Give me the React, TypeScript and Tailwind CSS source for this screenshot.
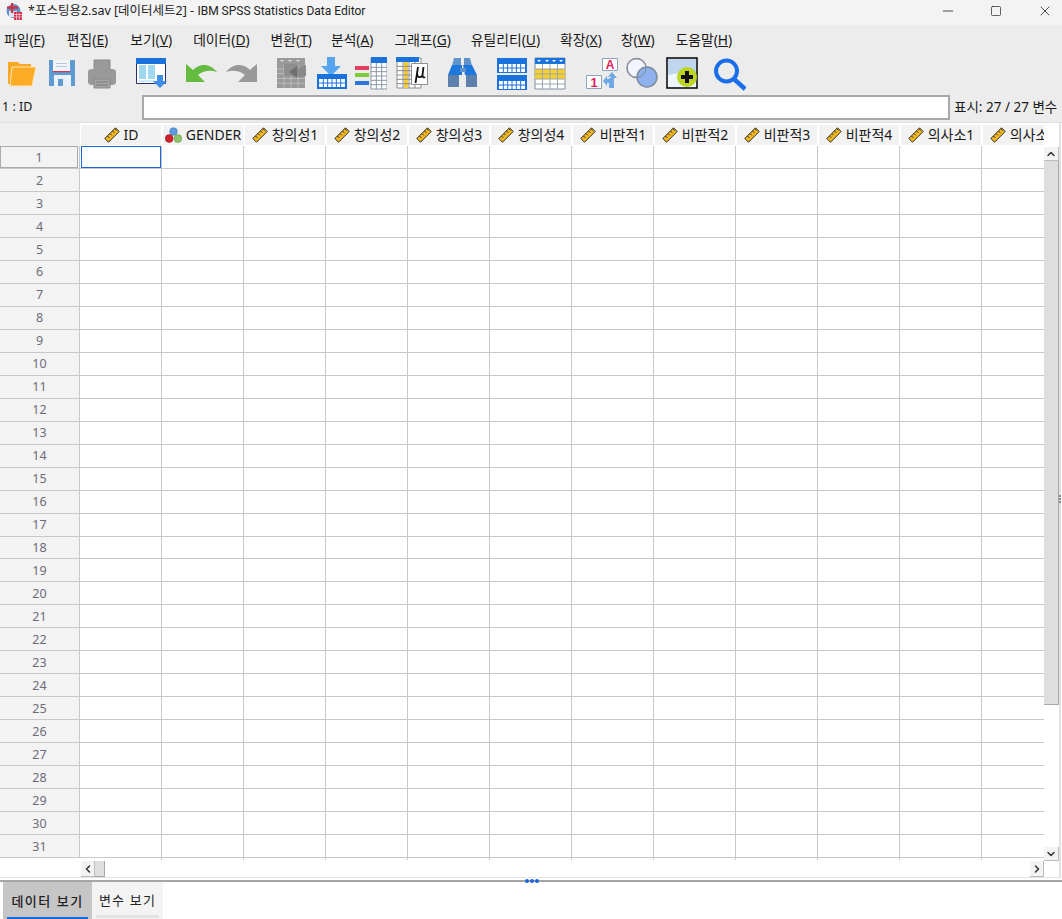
import { Minus, Square, X, ChevronUp, ChevronDown, ChevronLeft, ChevronRight } from 'lucide-react'

const FONT = "font-['Noto_Sans','Noto_Sans_CJK_KR',sans-serif]"

const MENUS = [
  { label: '파일', key: 'F', ml: 'ml-[4px]' },
  { label: '편집', key: 'E', ml: 'ml-[22px]' },
  { label: '보기', key: 'V', ml: 'ml-[22px]' },
  { label: '데이터', key: 'D', ml: 'ml-[21px]' },
  { label: '변환', key: 'T', ml: 'ml-[21px]' },
  { label: '분석', key: 'A', ml: 'ml-[19px]' },
  { label: '그래프', key: 'G', ml: 'ml-[21px]' },
  { label: '유틸리티', key: 'U', ml: 'ml-[20px]' },
  { label: '확장', key: 'X', ml: 'ml-[20px]' },
  { label: '창', key: 'W', ml: 'ml-[19px]' },
  { label: '도움말', key: 'H', ml: 'ml-[21px]' },
]

const COLUMNS = [
  { name: 'ID', type: 'scale' },
  { name: 'GENDER', type: 'nominal' },
  { name: '창의성1', type: 'scale' },
  { name: '창의성2', type: 'scale' },
  { name: '창의성3', type: 'scale' },
  { name: '창의성4', type: 'scale' },
  { name: '비판적1', type: 'scale' },
  { name: '비판적2', type: 'scale' },
  { name: '비판적3', type: 'scale' },
  { name: '비판적4', type: 'scale' },
  { name: '의사소1', type: 'scale' },
  { name: '의사소2', type: 'scale' },
]

const ROWS = Array.from({ length: 31 }, (_, i) => i + 1)

function GridLines({ x, y, w, h, cols, rows, color }: { x: number; y: number; w: number; h: number; cols: number; rows: number; color: string }) {
  // thin white or grey lines for the little tables in the toolbar icons
  const lines = []
  for (let i = 1; i < cols; i++) {
    const p = x + (w / cols) * i
    lines.push(<path key={'c' + i} d={`M${p} ${y}V${y + h}`} stroke={color} strokeWidth="1" />)
  }
  for (let i = 1; i < rows; i++) {
    const p = y + (h / rows) * i
    lines.push(<path key={'r' + i} d={`M${x} ${p}H${x + w}`} stroke={color} strokeWidth="1" />)
  }
  return <>{lines}</>
}

function Icon({ children, ml }: { children: React.ReactNode; ml: string }) {
  return (
    <svg viewBox="0 0 32 34" className={`w-[32px] h-[34px] shrink-0 ${ml}`}>
      {children}
    </svg>
  )
}

function Toolbar() {
  return (
    <div className="h-[40px] flex items-start pt-[5px] bg-[#ececec]">
      {/* open */}
      <Icon ml="ml-[6px]">
        <path d="M2 5h10l2 2h11v5H2z" fill="#f9a825" />
        <path d="M2 5h3v22H2z" fill="#f9a825" />
        <path d="M6 10h24l-4 19H4z" fill="#fbab25" stroke="#fde6b8" strokeWidth="1" />
      </Icon>
      {/* save */}
      <Icon ml="ml-[9px]">
        <path d="M2 3h26v26H2z" fill="#5f9bd2" />
        <path d="M6 3h17v11H6z" fill="#f1f4f9" />
        <path d="M6 14h17v1.200H6z" fill="#d8344f" />
        <path d="M9 6.500h11M9 9.500h11" stroke="#b6c4d8" strokeWidth="1.200" />
        <path d="M7 18h17v11H7z" fill="#e9f2fb" />
        <path d="M11 22h5v7h-5z" fill="#5f9bd2" />
      </Icon>
      {/* print */}
      <Icon ml="ml-[7px]">
        <path d="M8 3h16v10H8z" fill="#9a9a9a" stroke="#8a8a8a" />
        <path d="M2 15q0-3 4-3h20q4 0 4 3v10q0 3-4 3H6q-4 0-4-3z" fill="#999" />
        <path d="M8 22h16v9H8z" fill="#a3a3a3" stroke="#8a8a8a" />
        <path d="M10 25h12M10 28h12" stroke="#7f7f7f" />
      </Icon>
      {/* data view */}
      <Icon ml="ml-[17px]">
        <path d="M1.500 6.500h29v20h-29z" fill="#fff" stroke="#23306a" />
        <path d="M1 1h30v6H1z" fill="#1a73dc" />
        <path d="M4 8h7v14H4zM13 8h7v14h-7z" fill="#a0d8f2" />
        <path d="M4 23.500h16v1H4z" fill="#a0d8f2" />
        <path d="M22 18h6v6h4l-7 7-7-7h4z" fill="#3f8fe8" />
      </Icon>
      {/* undo */}
      <Icon ml="ml-[18px]">
        <path d="M1 7l7 6c7-7 17-7 24 2-6-2-13-2-19 3l7 7H1z" fill="#63bb3f" />
      </Icon>
      {/* redo */}
      <Icon ml="ml-[9px]">
        <path d="M31 7l-7 6C17 6 7 6 0 15c6-2 13-2 19 3l-7 7h19z" fill="#999" />
      </Icon>
      {/* go to case */}
      <Icon ml="ml-[17px]">
        <path d="M2 1h28v30H2z" fill="#9a9a9a" />
        <GridLines x={2} y={7} w={28} h={24} cols={4} rows={5} color="#bcbcbc" />
        <path d="M5 3h4l-2 2zM13 3h4l-2 2zM21 3h4l-2 2z" fill="#e2e2e2" />
        <path d="M9 7h14v12H9z" fill="#8f8f8f" />
        <path d="M31 8L18 14l6 6 7-1z" fill="#8a8a8a" />
        <path d="M22 9l-8 6 8 6z" fill="#6f6f6f" />
      </Icon>
      {/* insert cases */}
      <Icon ml="ml-[9px]">
        <path d="M6 0h8v9h6L10 19 0 9h6z" transform="translate(5 0)" fill="#57a5ee" />
        <path d="M1 17h30v15H1z" fill="#1a73dc" />
        <path d="M3 22h26v8H3z" fill="#fff" />
        <GridLines x={3} y={22} w={26} h={8} cols={6} rows={2} color="#1a73dc" />
      </Icon>
      {/* insert variable */}
      <Icon ml="ml-[7px]">
        <path d="M16 1h16v31H16z" fill="#fff" stroke="#8a96a8" />
        <path d="M16 0h16v6H16z" fill="#1a73dc" />
        <GridLines x={16} y={6} w={16} h={26} cols={3} rows={6} color="#8a96a8" />
        <path d="M0 9h14v4H0z" fill="#e2405f" />
        <path d="M0 16h14v4H0z" fill="#7ccb3b" />
        <path d="M0 24h14v4H0z" fill="#2b74d8" />
      </Icon>
      {/* mu box */}
      <Icon ml="ml-[9px]">
        <path d="M1 1h24v30H1z" fill="#fff" stroke="#8c8c8c" />
        <path d="M0 0h23v5H0z" fill="#1a73dc" />
        <path d="M8 5h4v26H8z" fill="#f2cc3d" />
        <GridLines x={1} y={5} w={24} h={26} cols={4} rows={6} color="#8c8c8c" />
        <path d="M15.500 6.500h16v21h-16z" fill="#fff" stroke="#8f8f8f" />
        <path d="M22 10l-2.500 16M21.200 17c-.3 4 5 4.500 5.500 0M27.500 10l-1 8c0 2 1 3 2.500 2" fill="none" stroke="#111" strokeWidth="1.800" />
      </Icon>
      {/* find */}
      <Icon ml="ml-[18px]">
        <path d="M8 1h7v8H6zM18 1h6l2 8h-8z" fill="#5f93c9" />
        <path d="M6 8h10v10H2zM17 8h9l5 10H19z" fill="#1e78dc" />
        <path d="M14 11h6v4h-6z" fill="#5f93c9" />
        <path d="M2 18h11v12H2zM20 18h11v12H20z" fill="#5e80ad" />
      </Icon>
      {/* split file */}
      <Icon ml="ml-[18px]">
        <path d="M1 1h30v15H1z" fill="#1a73dc" />
        <path d="M3 7h26v8H3z" fill="#fff" />
        <GridLines x={3} y={7} w={26} h={8} cols={6} rows={2} color="#1a73dc" />
        <path d="M1 18h30v15H1z" fill="#1a73dc" />
        <path d="M3 24h26v8H3z" fill="#fff" />
        <GridLines x={3} y={24} w={26} h={8} cols={6} rows={2} color="#1a73dc" />
      </Icon>
      {/* select cases */}
      <Icon ml="ml-[6px]">
        <path d="M1 1h30v31H1z" fill="#fff" stroke="#8090a8" />
        <path d="M1 1h30v6H1z" fill="#1a73dc" />
        <path d="M3 3h4l-2 2zM11 3h4l-2 2zM18 3h4l-2 2zM25 3h4l-2 2z" fill="#fff" />
        <path d="M1 12h30v10H1z" fill="#f6cf2c" />
        <GridLines x={1} y={7} w={30} h={25} cols={4} rows={5} color="#9aa4b2" />
      </Icon>
      {/* value labels */}
      <Icon ml="ml-[20px]">
        <path d="M16.500 1.500h15v12h-15z" fill="#fff" stroke="#8fa3bd" />
        <text x="24" y="12" textAnchor="middle" fontSize="12" fontWeight="700" fill="#e01e5a" fontFamily="Liberation Sans">A</text>
        <path d="M.5 18.500h15v13H.5z" fill="#fff" stroke="#8fa3bd" />
        <text x="8" y="30" textAnchor="middle" fontSize="13" fontWeight="700" fill="#e01e5a" fontFamily="Liberation Sans">1</text>
        <path d="M26 15l5 6h-3v10h-5v-5h-2v3l-4-5 4-5v3h2v-1h2v-1h-3z" fill="#6fa8e6" />
      </Icon>
      {/* variable sets */}
      <Icon ml="ml-[8px]">
        <circle cx="10.500" cy="11" r="9.500" fill="#f2f5fd" stroke="#9a9a9a" strokeWidth="1.500" />
        <circle cx="21" cy="20" r="10" fill="#8fb1ee" stroke="#7f8a9c" strokeWidth="1.500" />
        <circle cx="10.500" cy="11" r="9.500" fill="none" stroke="#7f8a9c" strokeWidth="1" />
      </Icon>
      {/* show all */}
      <Icon ml="ml-[8px]">
        <path d="M1 1h30v30H1z" fill="#eef5fc" stroke="#000" strokeWidth="1.500" />
        <path d="M2 2h28v14c-10-2-18 0-28 2z" fill="#c0d6ef" />
        <circle cx="21" cy="20" r="10" fill="#bdd522" />
        <path d="M19 14h4v4h4v4h-4v4h-4v-4h-4v-4h4z" fill="#111" />
      </Icon>
      {/* search */}
      <Icon ml="ml-[16px]">
        <circle cx="12.500" cy="14" r="10.500" fill="none" stroke="#1a6fe8" strokeWidth="4" />
        <path d="M20.500 22.500l9 8" stroke="#1a6fe8" strokeWidth="4.500" strokeLinecap="square" />
      </Icon>
    </div>
  )
}

function ScaleIcon() {
  return (
    <svg viewBox="0 0 16 16" className="w-[16px] h-[16px] shrink-0">
      <path d="M.8 11.500L11.500 .8L15.200 4.500L4.500 15.200z" fill="#f2b81f" stroke="#2b2b2b" strokeWidth="1" />
      <path d="M3.500 9l1.800 1.800M6 6.500l1.800 1.800M8.500 4l1.800 1.800M11 1.800l1.800 1.800" stroke="#2b2b2b" strokeWidth="1" />
    </svg>
  )
}

function NominalIcon() {
  return (
    <svg viewBox="0 0 17 17" className="w-[17px] h-[17px] shrink-0">
      <circle cx="8.500" cy="4.500" r="3.800" fill="#5c9be0" stroke="#3f73b0" strokeWidth=".6" />
      <circle cx="4.200" cy="11.500" r="3.900" fill="#d01f2f" stroke="#99202a" strokeWidth=".6" />
      <circle cx="12.800" cy="11.500" r="3.900" fill="#8fc46a" stroke="#6a9a4a" strokeWidth=".6" />
    </svg>
  )
}

function HeaderCell({ name, type }: { name: string; type: string }) {
  return (
    <div className="w-[82px] shrink-0 h-full px-[1px] pt-[2px] pb-[1px]">
      <div className="h-full bg-[#f2f2f2] flex items-center justify-center gap-[4px] text-[14px] leading-none text-[#1a1a1a] whitespace-nowrap">
        {type === 'scale' ? <ScaleIcon /> : <NominalIcon />}
        <span>{name}</span>
      </div>
    </div>
  )
}

function Row({ n }: { n: number }) {
  const active = n === 1
  return (
    <div className="flex h-[23px]">
      <div className="w-[80px] shrink-0 bg-[#f3f3f3] border-r border-b border-[#c8c8c8] text-[12.500px] text-[#6d6d7a]">
        <div className={`h-full flex items-center justify-center pt-[2px] ${active ? 'border border-[#ababab] mr-[1px]' : ''}`}>{n}</div>
      </div>
      {COLUMNS.map((c, i) => (
        <div key={c.name} className="w-[82px] shrink-0 border-r border-b border-[#c8c8c8] bg-white">
          {active && i === 0 && <div className="h-[22px] w-[80px] ml-[1px] border border-[#1a66e0]" />}
        </div>
      ))}
    </div>
  )
}

function ArrowButton({ children, className }: { children: React.ReactNode; className: string }) {
  return <div className={`bg-[#f3f3f3] border-r border-b border-[#bdbdbd] flex items-center justify-center text-[#333] ${className}`}>{children}</div>
}

export default function App() {
  return (
    <div className={`w-[1062px] h-[919px] bg-white overflow-hidden flex flex-col text-[#1a1a1a] ${FONT}`}>
      {/* title bar */}
      <div className="h-[25px] bg-[#f3f3f3] flex items-center shrink-0">
        <svg viewBox="0 0 16 17" className="w-[16px] h-[17px] ml-[6px] mb-[3px]">
          <circle cx="7.500" cy="8" r="7" fill="#5f93c9" />
          <path d="M3 8h8v6H3z" fill="#dbe6f3" />
          <path d="M8 9h8v8H8z" fill="#d22f4f" />
          <path d="M8 11.500h8M8 14h8M10.500 10v7M13.200 10v7" stroke="#f6d5dc" strokeWidth=".7" />
          <path d="M5 0h2.200v10H5zM1 3.500h11v2.200H1z" fill="#d22f3f" />
        </svg>
        <span className="ml-[6px] mb-[3px] text-[12.500px] leading-none text-[#222] whitespace-nowrap">
          *포스팅용2.sav [데이터세트2] - <span className="font-['Roboto','Noto_Sans',sans-serif] text-[12px]">IBM SPSS Statistics Data Editor</span>
        </span>
        <div className="ml-auto flex items-center text-[#222] mb-[4px]">
          <Minus className="w-[16px] h-[16px]" strokeWidth={1.2} />
          <Square className="w-[12px] h-[12px] ml-[34px]" strokeWidth={1.4} />
          <X className="w-[16px] h-[16px] ml-[35px] mr-[9px]" strokeWidth={1.2} />
        </div>
      </div>

      {/* menu */}
      <div className="h-[27px] bg-[#ececec] flex items-center pt-[3px] text-[13.800px] leading-none text-[#1a1a1a] shrink-0">
        {MENUS.map(m => (
          <span key={m.key} className={m.ml}>
            {m.label}(<span className="underline">{m.key}</span>)
          </span>
        ))}
      </div>

      <Toolbar />

      {/* cell editor */}
      <div className="h-[31px] bg-[#ececec] flex items-center text-[12.500px] shrink-0 border-b border-[#e0e0e0]">
        <span className="w-[142px] pl-[2px] pt-[1px]">1 : ID</span>
        <div className="w-[808px] h-[25px] bg-white border-2 border-[#a8a8a8]" />
        <span className="ml-[4px] text-[13.500px] whitespace-nowrap">표시: 27 / 27 변수</span>
      </div>

      {/* data grid */}
      <div className="flex h-[755px] shrink-0 border-r-2 border-[#e2e2e2] border-b w-[1061px] relative">
        <div className="w-[1044px] overflow-hidden shrink-0 flex flex-col">
          <div className="flex h-[23px] shrink-0">
            <div className="w-[80px] shrink-0 bg-[#f0f0f0]" />
            {COLUMNS.map(c => (
              <HeaderCell key={c.name} name={c.name} type={c.type} />
            ))}
          </div>
          {ROWS.map(n => (
            <Row key={n} n={n} />
          ))}
          <div className="flex h-[2px] shrink-0">
            <div className="w-[80px] shrink-0" />
            {COLUMNS.map(c => (
              <div key={c.name} className="w-[82px] shrink-0 border-r border-[#c8c8c8]" />
            ))}
          </div>
          {/* horizontal scrollbar */}
          <div className="flex items-start pt-[1px] h-[17px] shrink-0 pl-[81px]">
            <ArrowButton className="w-[14px] h-[16px]">
              <ChevronLeft className="w-[12px] h-[12px]" strokeWidth={3} />
            </ArrowButton>
            <div className="w-[10px] h-[16px] bg-[#dedede] border-r border-b border-[#a8a8a8]" />
            <div className="flex-1" />
            <ArrowButton className="w-[14px] h-[16px]">
              <ChevronRight className="w-[12px] h-[12px]" strokeWidth={3} />
            </ArrowButton>
          </div>
        </div>
        {/* vertical scrollbar */}
        <div className="w-[15px] shrink-0 flex flex-col pt-[24px] h-[738px]">
          <ArrowButton className="h-[14px]">
            <ChevronUp className="w-[12px] h-[12px]" strokeWidth={3} />
          </ArrowButton>
          <div className="h-[544px] bg-[#dedede] border-r border-b border-[#a8a8a8]" />
          <div className="flex-1" />
          <ArrowButton className="h-[14px]">
            <ChevronDown className="w-[12px] h-[12px]" strokeWidth={3} />
          </ArrowButton>
        </div>
        {/* side splitter grip */}
        <div className="absolute right-[-2px] top-[372px] flex flex-col gap-[1px]">
          <div className="w-[2px] h-[2px] bg-[#8a8a8a]" />
          <div className="w-[2px] h-[2px] bg-[#8a8a8a]" />
          <div className="w-[2px] h-[2px] bg-[#8a8a8a]" />
        </div>
      </div>

      {/* divider with splitter dots */}
      <div className="h-[4px] shrink-0 flex flex-col justify-end relative">
        <div className="h-[2px] bg-[#a6a6a6]" />
        <div className="absolute left-[525px] top-[1px] flex gap-[1px]">
          <div className="w-[4px] h-[4px] rounded-full bg-[#1a66e0]" />
          <div className="w-[4px] h-[4px] rounded-full bg-[#1a66e0]" />
          <div className="w-[4px] h-[4px] rounded-full bg-[#1a66e0]" />
        </div>
      </div>

      {/* tabs */}
      <div className="flex-1 flex pl-[3px] text-[13px] leading-none">
        <div className="w-[89px] bg-[#c6c6c6] flex flex-col items-center px-[4px] font-medium text-[#222] tracking-[1.500px]">
          <span className="flex-1 flex items-center pt-[3px]">데이터 보기</span>
          <div className="h-[2px] w-full bg-[#1a66e0]" />
        </div>
        <div className="w-[71px] bg-[#f3f3f3] flex flex-col items-center px-[4px] pb-[1px] text-[#222] tracking-[1.200px]">
          <span className="flex-1 flex items-center pt-[3px]">변수 보기</span>
          <div className="h-[3px] w-full bg-[#e2e2e2]" />
        </div>
      </div>
    </div>
  )
}
